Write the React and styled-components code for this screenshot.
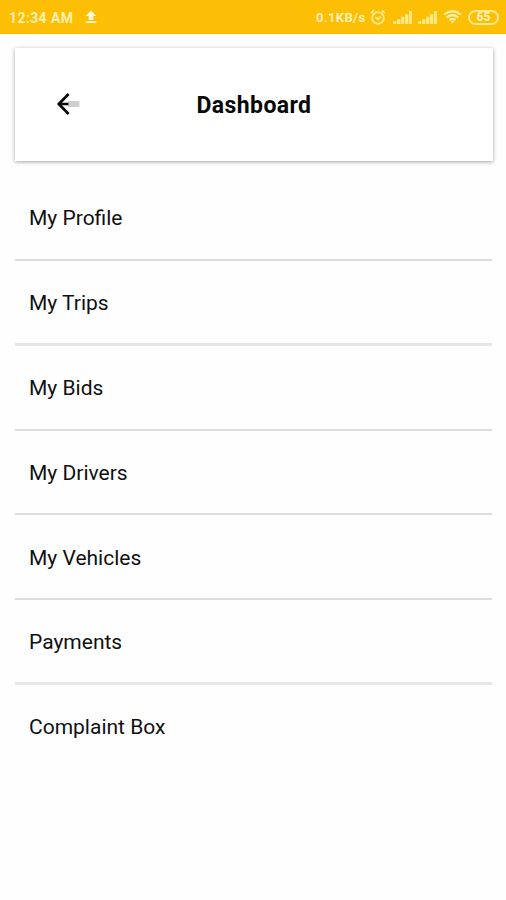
import React from "react";
import styled, { createGlobalStyle } from "styled-components";

const GlobalStyle = createGlobalStyle`
  * { box-sizing: border-box; }
  body { margin: 0; background: #fefefe; font-family: Roboto, "Liberation Sans", sans-serif; }
`;

const Screen = styled.div`
  display: flex;
  flex-direction: column;
  height: 900px;
  overflow: hidden;
  background: #fefefe;
`;

const StatusBar = styled.header`
  display: flex;
  align-items: center;
  justify-content: space-between;
  flex: none;
  height: 34px;
  padding: 0 7px 0 9px;
  background: #fdbf06;
  color: #fff3bd;
`;

const StatusGroup = styled.div`
  display: flex;
  align-items: center;
  height: 34px;
`;

const Clock = styled.span`
  width: 76px;
  padding-top: 1px;
  font-size: 14px;
  font-weight: 600;
  line-height: 34px;
  letter-spacing: 0.45px;
  white-space: nowrap;
`;

const Speed = styled.span`
  width: 54px;
  padding-top: 1px;
  font-size: 13px;
  font-weight: 600;
  line-height: 34px;
  letter-spacing: 0.4px;
  white-space: nowrap;
`;

const Icon = styled.svg`
  display: block;
  flex: none;
  margin-left: ${(p) => p.$gap || 0}px;
  overflow: visible;
`;

const Battery = styled.span`
  display: flex;
  align-items: center;
  justify-content: center;
  width: 31px;
  height: 15px;
  margin-left: 6px;
  border: 2px solid #ffe98d;
  border-radius: 8px;
  font-size: 12px;
  font-weight: 700;
  line-height: 12px;
`;

const TitleCard = styled.section`
  display: grid;
  grid-template-columns: 1fr auto 1fr;
  align-items: center;
  flex: none;
  height: 113px;
  margin: 14px 13px 0 15px;
  padding: 2px 0 0;
  background: #fff;
  box-shadow: 0 1px 4px rgba(0, 0, 0, 0.36);
`;

const BackButton = styled.button`
  justify-self: start;
  margin: 0 0 3px 41px;
  padding: 0;
  border: 0;
  background: none;
`;

const Title = styled.h1`
  margin: 0;
  color: #080808;
  font-size: 23px;
  font-weight: 700;
  line-height: 30px;
  letter-spacing: 0.4px;
`;

const Menu = styled.nav`
  display: flex;
  flex-direction: column;
  margin: 15px 14px 0 15px;
`;

const MenuItem = styled.a`
  display: flex;
  align-items: center;
  height: 84.85px;
  padding: ${(p) => (p.$rule ? "2px" : "0")} 14px 0;
  border-bottom: ${(p) => p.$rule}px solid ${(p) => (p.$rule === 3 ? "#e6e6e6" : "#dcdcdc")};
  color: #101010;
  font-size: 21px;
  line-height: 28px;
`;

const items = [
  { label: "My Profile", rule: 2 },
  { label: "My Trips", rule: 3 },
  { label: "My Bids", rule: 2 },
  { label: "My Drivers", rule: 2 },
  { label: "My Vehicles", rule: 2 },
  { label: "Payments", rule: 3 },
  { label: "Complaint Box", rule: 0 },
];

function UploadIcon() {
  return (
    <Icon width="12" height="14" viewBox="0 0 12 14" fill="#fff7d8">
      <path d="M6 0.5 11.3 6H8.3V10H3.7V6H0.7Z" />
      <path d="M0.7 11.3H11.3V13H0.7Z" />
    </Icon>
  );
}

function AlarmIcon() {
  return (
    <Icon width="16" height="16" viewBox="0 0 16 16" fill="none" stroke="#ffeb98" strokeWidth="1.7">
      <circle cx="8" cy="9" r="5.9" />
      <path d="M1 4 4 1.4M15 4 12 1.4M5.3 8.2 8 10.2 11 7.7" />
    </Icon>
  );
}

function SignalIcon({ gap }) {
  return (
    <Icon $gap={gap} width="19" height="13" viewBox="0 0 19 13" fill="#ffe985">
      <path d="M0 10.3h3.3V13H0zM4 8.3h3.3V13H4zM8 5.8h3.3V13H8zM12 3.2h3.3V13H12zM16 0h3v13h-3z" />
    </Icon>
  );
}

function WifiIcon() {
  return (
    <Icon $gap={6} width="19" height="14" viewBox="0 0 19 14" fill="none" stroke="#fff0aa" strokeWidth="2.2">
      <path d="M1 4.5Q9.5-2 18 4.5M3.8 7.3Q9.5 3 15.2 7.3M6.5 10Q9.5 7.8 12.5 10" />
      <path d="M7.5 11 9.5 13.5 11.5 11Z" fill="#fff0aa" stroke="none" />
    </Icon>
  );
}

function BackIcon() {
  return (
    <Icon width="24" height="24" viewBox="0 0 24 24" fill="none">
      <path d="M12 9H23.5V15H12Z" fill="#cfcfcf" />
      <path d="M12.6 2 2.8 12 12.6 22M2.8 12H12.5" stroke="#080808" strokeWidth="2.7" />
    </Icon>
  );
}

export default function App() {
  return (
    <Screen>
      <GlobalStyle />
      <StatusBar>
        <StatusGroup>
          <Clock>12:34 AM</Clock>
          <UploadIcon />
        </StatusGroup>
        <StatusGroup>
          <Speed>0.1KB/s</Speed>
          <AlarmIcon />
          <SignalIcon gap={7} />
          <SignalIcon gap={6} />
          <WifiIcon />
          <Battery>65</Battery>
        </StatusGroup>
      </StatusBar>
      <TitleCard>
        <BackButton aria-label="Back"><BackIcon /></BackButton>
        <Title>Dashboard</Title>
      </TitleCard>
      <Menu>
        {items.map(({ label, rule }) => (
          <MenuItem key={label} $rule={rule}>{label}</MenuItem>
        ))}
      </Menu>
    </Screen>
  );
}
